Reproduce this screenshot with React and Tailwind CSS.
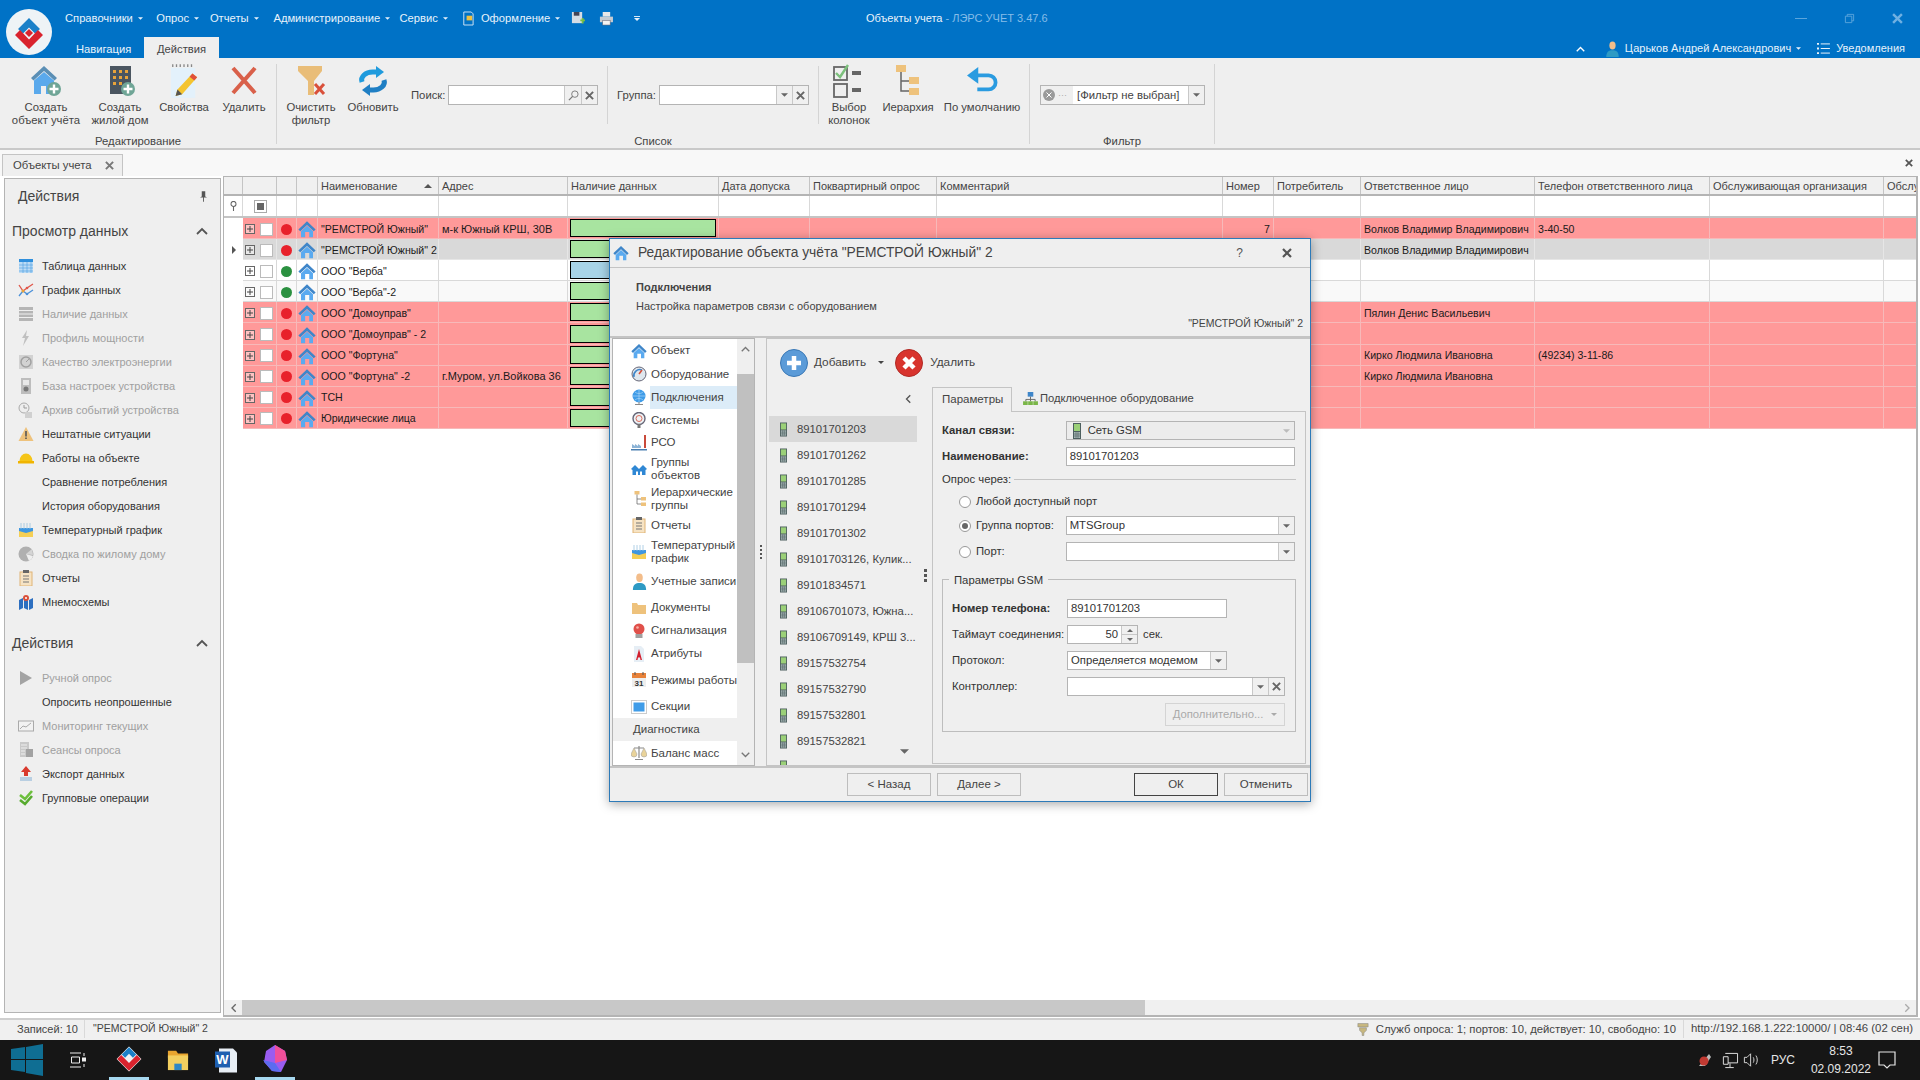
import React from "react";

const GRID_COLS =
  "grid grid-cols-[19px_34px_20px_21px_121px_129px_151px_91px_127px_286px_51px_87px_174px_175px_174px_35px]";

const Tri = ({ className = "w-[7px] h-[4px]" }) => (
  <svg viewBox="0 0 8 4" className={className}>
    <path d="M0 0h8L4 4z" fill="currentColor" />
  </svg>
);

const Cross = ({ className = "w-[9px] h-[9px] text-[#666]" }) => (
  <svg viewBox="0 0 10 10" className={className}>
    <path d="M1 1l8 8M9 1l-8 8" stroke="currentColor" strokeWidth="2.2" />
  </svg>
);

const Chevron = ({ className = "w-[12px] h-[8px] text-[#555]" }) => (
  <svg viewBox="0 0 12 8" className={className} fill="none">
    <path d="M1 7l5-5 5 5" stroke="currentColor" strokeWidth="1.8" />
  </svg>
);

const Logo = ({ className }) => (
  <svg viewBox="0 0 46 46" className={className}>
    <path d="M23 9l11 11-5 4.500-6-6-6 6-5-4.500z" fill="#1b80c8" />
    <path d="M9 26l5-5 9 9.500 9-9.500 5 5-14 14z" fill="#d9232e" />
    <path d="M23 20l4 4-4 4-4-4z" fill="#d9232e" />
  </svg>
);

const Home = ({ className = "w-[16px] h-[16px]" }) => (
  <svg viewBox="0 0 24 24" className={className}>
    <path d="M12 1.500L0.500 12.500 3 15l9-8.500 9 8.500 2.500-2.500z" fill="#3f86c9" />
    <path d="M4 15l8-7.500 8 7.500v8h-5v-7H9.500v7H4z" fill="#5aaaf0" />
  </svg>
);

const PlusBadge = () => (
  <>
    <circle cx="24" cy="24" r="7" fill="#6fa596" />
    <path d="M24 19.500v9M19.500 24h9" stroke="#fff" strokeWidth="2.400" />
  </>
);

const HouseAdd = () => (
  <svg viewBox="0 0 32 32" className="w-[32px] h-[32px]">
    <path d="M14 1L1 13l2.500 2.500L14 6l10.500 9.500L27 13z" fill="#5b8fb5" />
    <path d="M4 15.500L14 7l10 8.500V29h-8v-8h-5v8H4z" fill="#5aa9ec" />
    <PlusBadge />
  </svg>
);

const BuildingAdd = () => (
  <svg viewBox="0 0 32 32" className="w-[32px] h-[32px]">
    <rect x="6" y="1" width="21" height="28" fill="#4a5560" />
    <path d="M9 5h3v3H9zM15 5h3v3h-3zM21 5h3v3h-3zM9 11h3v3H9zM15 11h3v3h-3zM21 11h3v3h-3zM9 17h3v3H9zM15 17h3v3h-3z" fill="#e8a33a" />
    <PlusBadge />
  </svg>
);

const Notepad = () => (
  <svg viewBox="0 0 32 40" className="w-[30px] h-[38px]">
    <rect x="2" y="6" width="26" height="32" fill="#e3f1fb" />
    <path d="M4 2v3M8 2v3M12 2v3M16 2v3M20 2v3M24 2v3" stroke="#888" strokeWidth="1.400" />
    <path d="M25 12l5 4-16 18-7 2 2-7z" fill="#f4c430" />
    <path d="M25 12l5 4-3 3.500-5-4z" fill="#e0503c" />
    <path d="M9 29l5 5-7 2z" fill="#555" />
  </svg>
);

const BigX = () => (
  <svg viewBox="0 0 32 32" className="w-[32px] h-[32px]">
    <path d="M5 3l22 25M27 3L5 28" stroke="#d9604a" strokeWidth="4" />
  </svg>
);

const FunnelX = () => (
  <svg viewBox="0 0 32 32" className="w-[32px] h-[32px]">
    <path d="M3 1h24v5l-8 10v14l-6 0V16L3 6z" fill="#e9bd78" />
    <path d="M20 19l9 10M29 19l-9 10" stroke="#d9503a" strokeWidth="3" />
  </svg>
);

const Refresh = () => (
  <svg viewBox="0 0 32 32" className="w-[32px] h-[32px]" fill="none">
    <path d="M5 17a11 8 0 0 1 11-10h6" stroke="#1f9bdd" strokeWidth="5" />
    <path d="M27 15a11 8 0 0 1-11 10h-6" stroke="#1f7fc4" strokeWidth="5" />
    <path d="M19 1l8 6-8 6z" fill="#1f9bdd" />
    <path d="M13 19l-8 6 8 6z" fill="#1f7fc4" />
  </svg>
);

const ColumnsIcon = () => (
  <svg viewBox="0 0 32 34" className="w-[32px] h-[34px]" fill="none">
    <rect x="1" y="3" width="13" height="13" stroke="#666" strokeWidth="1.800" />
    <rect x="1" y="20" width="13" height="13" stroke="#666" strokeWidth="1.800" />
    <path d="M3 9l4 4 8-12" stroke="#7cc07c" strokeWidth="2.400" />
    <path d="M19 9h9M19 26h9" stroke="#666" strokeWidth="4" />
  </svg>
);

const Hierarchy = ({ className = "w-[24px] h-[32px]" }) => (
  <svg viewBox="0 0 24 32" className={className}>
    <rect x="0" y="0" width="10" height="7" fill="#eec27c" />
    <path d="M5 7v19h8M5 16h8" stroke="#666" strokeWidth="1.500" fill="none" />
    <rect x="13" y="12" width="10" height="7" fill="#eec27c" />
    <rect x="13" y="23" width="10" height="7" fill="#eec27c" />
  </svg>
);

const Undo = () => (
  <svg viewBox="0 0 34 32" className="w-[34px] h-[30px]" fill="none">
    <path d="M10 10h14a7 7 0 0 1 0 15H12" stroke="#2a9be0" strokeWidth="4" />
    <path d="M13 1v18L1 10z" fill="#2a9be0" />
  </svg>
);

const Person = ({ className = "w-[14px] h-[18px]" }) => (
  <svg viewBox="0 0 14 18" className={className}>
    <ellipse cx="7" cy="5" rx="3.500" ry="4.500" fill="#f3bd8a" />
    <path d="M0 18c0-6 3-7.500 7-7.500s7 1.500 7 7.500z" fill="#2e9ac4" />
  </svg>
);

// little sidebar and nav pictures, all 16 by 16
const Pic = ({ children, className = "w-[16px] h-[16px]" }) => (
  <svg viewBox="0 0 16 16" className={className}>
    {children}
  </svg>
);

const icons = {
  table: (
    <Pic>
      <rect x="1" y="1" width="14" height="14" fill="#bcdcf5" />
      <rect x="1" y="1" width="14" height="3" fill="#2f8fdc" />
      <path d="M1 7h14M1 10h14M1 13h14M5 4v11M9 4v11M13 4v11" stroke="#4aa0e0" strokeWidth=".6" />
    </Pic>
  ),
  chart: (
    <Pic>
      <path d="M1 3l4 6 4-3 6-4" stroke="#e0574a" fill="none" strokeWidth="1.300" />
      <path d="M1 14l4-5 4 3 6-4" stroke="#4a90d9" fill="none" strokeWidth="1.300" />
      <circle cx="5" cy="9" r="1.500" fill="#e8a33a" />
      <circle cx="9" cy="6" r="1.300" fill="#e0574a" />
      <circle cx="9" cy="12" r="1.300" fill="#4a90d9" />
    </Pic>
  ),
  bars: (
    <Pic>
      <path d="M1 1h14v3H1zM1 5h14v2.500H1zM1 8.500h14V11H1zM1 12h14v3H1z" fill="#b5b5b5" />
    </Pic>
  ),
  bolt: (
    <Pic>
      <path d="M9 0L4 8h3l-2 8 6-10H8z" fill="#c0c0c0" />
    </Pic>
  ),
  quality: (
    <Pic>
      <rect x="1" y="1" width="14" height="14" fill="#d2d2d2" />
      <circle cx="8" cy="8" r="5" fill="none" stroke="#a0a0a0" strokeWidth="1.500" />
      <path d="M8 8l3-3" stroke="#a0a0a0" />
    </Pic>
  ),
  base: (
    <Pic>
      <rect x="3" y="0" width="10" height="16" fill="#bdbdbd" />
      <rect x="5" y="2" width="6" height="5" fill="#e8e8e8" />
      <circle cx="8" cy="11" r="2.500" fill="#777" />
    </Pic>
  ),
  archive: (
    <Pic>
      <circle cx="6" cy="6" r="5" fill="#eee" stroke="#aaa" />
      <path d="M6 3v3h3" stroke="#999" fill="none" />
      <rect x="7" y="10" width="7" height="6" fill="#d0d0d0" />
    </Pic>
  ),
  warning: (
    <Pic>
      <path d="M8 1l7.500 14H.5z" fill="#eec27c" />
      <path d="M7.200 5h1.600v5.500H7.200zM7.200 11.500h1.600V13H7.200z" fill="#555" />
    </Pic>
  ),
  helmet: (
    <Pic>
      <path d="M1.500 11a6.500 7.500 0 0 1 13 0z" fill="#f5c518" />
      <path d="M0 11h16v2.500H0z" fill="#f0b400" />
    </Pic>
  ),
  temp: (
    <Pic>
      <rect x="1" y="6" width="14" height="9" fill="#f5cf55" />
      <path d="M1 6h14v3L8 11 1 9z" fill="#3f97e0" />
      <path d="M3 1v6M6 1v6M9 1v6M12 1v6" stroke="#9cc4e0" strokeWidth=".8" />
    </Pic>
  ),
  pie: (
    <Pic>
      <circle cx="8" cy="8" r="7.500" fill="#b0b0b0" />
      <path d="M8 8l7 2a7.500 7.500 0 0 1-4 5z" fill="#efefef" />
      <path d="M8 8l6-5 1 6z" fill="#d5d5d5" />
    </Pic>
  ),
  report: (
    <Pic>
      <rect x="2" y="2" width="12" height="14" fill="#f6e3c4" stroke="#e0b476" />
      <rect x="5" y="0" width="6" height="3" fill="#666" />
      <path d="M5 6h6M5 9h6M5 12h6" stroke="#777" />
    </Pic>
  ),
  map: (
    <Pic>
      <path d="M1 6l4-2v10l-4 2zM6 4l4 2v10l-4-2zM11 6l4-2v10l-4 2z" fill="#2d6fc0" />
      <circle cx="8" cy="4" r="3" fill="#d9503a" />
      <circle cx="8" cy="4" r="1" fill="#fff" />
    </Pic>
  ),
  play: (
    <Pic>
      <path d="M2 1l12 7-12 7z" fill="#a3a3a3" />
    </Pic>
  ),
  monitor: (
    <Pic>
      <rect x="0.500" y="3" width="15" height="10" fill="#f2f2f2" stroke="#aaa" />
      <path d="M2 11l3-3 3 1 5-4" stroke="#aaa" fill="none" />
    </Pic>
  ),
  sessions: (
    <Pic>
      <rect x="2" y="0" width="9" height="15" fill="#c9c9c9" />
      <rect x="8" y="7" width="7" height="8" fill="#a2a2a2" />
      <path d="M3 3h6M3 6h6M3 9h4M3 12h4" stroke="#eee" />
    </Pic>
  ),
  exportUp: (
    <Pic>
      <path d="M8 0l5 6h-3v4H6V6H3z" fill="#d93a2e" />
      <rect x="2" y="11" width="12" height="4" fill="#b9cfe2" />
    </Pic>
  ),
  checks: (
    <Pic>
      <path d="M2 5l5 4 7-8" stroke="#6cbf3c" strokeWidth="2.600" fill="none" />
      <path d="M2 10l5 4 7-8" stroke="#57ab2e" strokeWidth="2.600" fill="none" />
    </Pic>
  ),
  gauge: (
    <Pic>
      <circle cx="8" cy="8" r="7" fill="#dfe7ee" stroke="#667" />
      <path d="M3 11a6 6 0 0 1 8-7" stroke="#3f86c9" strokeWidth="1.600" fill="none" />
      <path d="M8 8l3-4" stroke="#d9503a" strokeWidth="1.500" />
    </Pic>
  ),
  globe: (
    <Pic>
      <circle cx="8" cy="7" r="6.500" fill="#3f9ce8" />
      <path d="M2 7h12M8 1v12M4 3c2 2 6 2 8 0M4 11c2-2 6-2 8 0" stroke="#a9d6f6" strokeWidth=".7" fill="none" />
      <path d="M8 13v2M4 15.500h8" stroke="#8a8a8a" />
    </Pic>
  ),
  gaugeStem: (
    <Pic>
      <circle cx="8" cy="6.500" r="6" fill="#eef2f5" stroke="#667" strokeWidth="1.400" />
      <circle cx="8" cy="6.500" r="3" fill="none" stroke="#d96a5a" />
      <rect x="6.500" y="12" width="3" height="4" fill="#777" />
    </Pic>
  ),
  factory: (
    <Pic>
      <rect x="13" y="0" width="2" height="13" fill="#c94a3a" />
      <path d="M1 13V9l3 2V9l3 2V9l3 2v2z" fill="#8db4d6" />
      <path d="M0 14h16v1.500H0z" fill="#4a7fb0" />
    </Pic>
  ),
  people: (
    <Pic>
      <path d="M0 8l4-4 4 4 4-4 4 4-1.500 1V14H11v-3.500H9V14H7v-3.500H5V14H1.500V9z" fill="#2f87d4" />
    </Pic>
  ),
  user: <Person className="w-[15px] h-[17px]" />,
  folder: (
    <Pic>
      <path d="M1 3h5l1 2h8v9H1z" fill="#eec27c" />
    </Pic>
  ),
  alarm: (
    <Pic>
      <circle cx="8" cy="6" r="5.500" fill="#e0504a" />
      <circle cx="6.500" cy="4.500" r="1.300" fill="#f7b0a8" />
      <rect x="4.500" y="11" width="7" height="4" fill="#a0a0a0" />
    </Pic>
  ),
  attr: (
    <Pic>
      <path d="M3 0h7l3 3v13H3z" fill="#e6eef5" />
      <path d="M5 14L8 3l3 11H9.500L9 11.500H7L6.500 14z" fill="#d3202e" />
    </Pic>
  ),
  calendar: (
    <Pic>
      <rect x="1" y="1" width="14" height="14" fill="#eee" />
      <rect x="1" y="1" width="14" height="5" fill="#e8823a" />
      <path d="M4 0v3M12 0v3" stroke="#555" />
      <text x="8" y="14" fontSize="8" fontWeight="700" textAnchor="middle" fill="#333" fontFamily="Liberation Sans">31</text>
    </Pic>
  ),
  section: (
    <Pic>
      <rect x="0.500" y="1.500" width="15" height="13" fill="#fff" stroke="#ccc" />
      <rect x="2.500" y="3.500" width="11" height="9" fill="#3f9ce8" />
    </Pic>
  ),
  scale: (
    <Pic>
      <path d="M8 1v12M3 3h10M4 14.500h8" stroke="#8a8a8a" strokeWidth="1.200" />
      <path d="M0 9l3-6 3 6a3 3 0 0 1-6 0zM10 9l3-6 3 6a3 3 0 0 1-6 0z" fill="#e9d39a" stroke="#999" strokeWidth=".5" />
    </Pic>
  ),
  hier: <Hierarchy className="w-[13px] h-[16px]" />,
};

const GsmIcon = ({ className = "w-[8px] h-[16px]" }) => (
  <svg viewBox="0 0 8 16" className={className}>
    <rect x="0" y="0" width="8" height="16" fill="#4d5f5f" />
    <rect x="1" y="1" width="6" height="7" fill="#9bd078" />
    <path d="M1 9h6v6H1z" fill="#a8b8b8" />
    <path d="M3 9v6M5 9v6M1 11h6M1 13h6" stroke="#4d5f5f" strokeWidth=".6" />
  </svg>
);

const menu = [
  { label: "Справочники", cls: "w-[92px]" },
  { label: "Опрос", cls: "w-[54px]" },
  { label: "Отчеты", cls: "w-[64px]" },
  { label: "Администрирование", cls: "w-[127px]" },
];

const sideTop = [
  ["table", "Таблица данных", 0],
  ["chart", "График данных", 0],
  ["bars", "Наличие данных", 1],
  ["bolt", "Профиль мощности", 1],
  ["quality", "Качество электроэнергии", 1],
  ["base", "База настроек устройства", 1],
  ["archive", "Архив событий устройства", 1],
  ["warning", "Нештатные ситуации", 0],
  ["helmet", "Работы на объекте", 0],
  [null, "Сравнение потребления", 0],
  [null, "История оборудования", 0],
  ["temp", "Температурный график", 0],
  ["pie", "Сводка по жилому дому", 1],
  ["report", "Отчеты", 0],
  ["map", "Мнемосхемы", 0],
];

const sideBottom = [
  ["play", "Ручной опрос", 1],
  [null, "Опросить неопрошенные", 0],
  ["monitor", "Мониторинг текущих", 1],
  ["sessions", "Сеансы опроса", 1],
  ["exportUp", "Экспорт данных", 0],
  ["checks", "Групповые операции", 0],
];

const headers = [
  "", "", "", "", "Наименование", "Адрес", "Наличие данных", "Дата допуска", "Поквартирный опрос",
  "Комментарий", "Номер", "Потребитель", "Ответственное лицо", "Телефон ответственного лица",
  "Обслуживающая организация", "Обслуживающая",
];

const PINK = "bg-[#ff9999] border-[#f7b9b9]";
const GREY = "bg-[#d9d9d9] border-[#e6e6e6]";
const WHITE = "bg-white border-[#d9d9d9]";
const OFFWHITE = "bg-[#f9f9f9] border-[#d9d9d9]";

const rows = [
  { name: "\"РЕМСТРОЙ Южный\"", addr: "м-к Южный КРШ, 30В", dot: "bg-[#e8212b]", tone: PINK, num: "7", person: "Волков Владимир Владимирович", phone: "3-40-50" },
  { name: "\"РЕМСТРОЙ Южный\" 2", dot: "bg-[#e8212b]", tone: GREY, selected: true, person: "Волков Владимир Владимирович" },
  { name: "ООО \"Верба\"", dot: "bg-[#2b9140]", tone: WHITE, bar: "bg-[#a8d4e8]" },
  { name: "ООО \"Верба\"-2", dot: "bg-[#2b9140]", tone: OFFWHITE },
  { name: "ООО \"Домоуправ\"", dot: "bg-[#e8212b]", tone: PINK, person: "Пялин Денис Васильевич" },
  { name: "ООО \"Домоуправ\" - 2", dot: "bg-[#e8212b]", tone: PINK },
  { name: "ООО \"Фортуна\"", dot: "bg-[#e8212b]", tone: PINK, person: "Кирко Людмила Ивановна", phone: "(49234) 3-11-86" },
  { name: "ООО \"Фортуна\" -2", addr: "г.Муром, ул.Войкова 36", dot: "bg-[#e8212b]", tone: PINK, person: "Кирко Людмила Ивановна" },
  { name: "ТСН", dot: "bg-[#e8212b]", tone: PINK },
  { name: "Юридические лица", dot: "bg-[#e8212b]", tone: PINK },
];

const navItems = [
  ["hier0", "Объект", "h-[24px]"],
  ["gauge", "Оборудование", "h-[23px]"],
  ["globe", "Подключения", "h-[23px]", "active"],
  ["gaugeStem", "Системы", "h-[23px]"],
  ["factory", "РСО", "h-[22px]"],
  ["people", "Группы объектов", "h-[31px]"],
  ["hier", "Иерархические группы", "h-[30px]"],
  ["report", "Отчеты", "h-[22px]"],
  ["temp", "Температурный график", "h-[32px]"],
  ["user", "Учетные записи", "h-[28px]"],
  ["folder", "Документы", "h-[24px]"],
  ["alarm", "Сигнализация", "h-[22px]"],
  ["attr", "Атрибуты", "h-[24px]"],
  ["calendar", "Режимы работы", "h-[30px]"],
  ["section", "Секции", "h-[23px]"],
  [null, "Диагностика", "h-[23px]", "group"],
  ["scale", "Баланс масс", "h-[24px]"],
];

const ports = [
  "89101701203", "89101701262", "89101701285", "89101701294", "89101701302",
  "89101703126, Кулик...", "89101834571", "89106701073, Южна...", "89106709149, КРШ 3...",
  "89157532754", "89157532790", "89157532801", "89157532821",
];

function RibbonBtn({ width, icon, lines }) {
  return (
    <div className={`flex flex-col items-center text-[#444] ${width}`}>
      <div className="mb-[4px] flex h-[33px] w-full items-center justify-center">{icon}</div>
      {lines.map((l) => (
        <span key={l} className="leading-[13px] whitespace-nowrap">
          {l}
        </span>
      ))}
    </div>
  );
}

function Ribbon() {
  return (
    <div className="flex h-[92px] bg-[#efefef] border-b-2 border-[#c9c9c9] text-[11.3px]">
      <div className="mt-[6px] flex h-[80px] w-[277px] flex-col border-r border-[#d4d4d4]">
        <div className="flex h-[70px] shrink-0 pl-[8px]">
          <RibbonBtn width="w-[76px]" icon={<HouseAdd />} lines={["Создать", "объект учёта"]} />
          <RibbonBtn width="w-[72px]" icon={<BuildingAdd />} lines={["Создать", "жилой дом"]} />
          <RibbonBtn width="w-[56px]" icon={<Notepad />} lines={["Свойства"]} />
          <RibbonBtn width="w-[64px]" icon={<BigX />} lines={["Удалить"]} />
        </div>
        <div className="text-center leading-[14px] text-[#444]">Редактирование</div>
      </div>

      <div className="mt-[6px] flex h-[80px] w-[753px] flex-col border-r border-[#d4d4d4]">
        <div className="flex h-[70px] shrink-0">
          <RibbonBtn width="w-[68px]" icon={<FunnelX />} lines={["Очистить", "фильтр"]} />
          <RibbonBtn width="w-[56px]" icon={<Refresh />} lines={["Обновить"]} />
          <div className="ml-[10px] pt-[21px] text-[#444]">
            <div className="flex items-center h-[20px]">
              <span className="w-[37px]">Поиск:</span>
              <div className="flex h-[20px] w-[150px] border border-[#b4b4b4] bg-white">
                <div className="flex-1" />
                <div className="flex w-[17px] items-center justify-center border-l border-[#c8c8c8] bg-[#f0f0f0]">
                  <svg viewBox="0 0 12 12" className="w-[11px] h-[11px]" fill="none">
                    <circle cx="7.500" cy="4.500" r="3.500" stroke="#777" />
                    <path d="M5 7l-4 4" stroke="#777" strokeWidth="1.400" />
                  </svg>
                </div>
                <div className="flex w-[16px] items-center justify-center border-l border-[#c8c8c8] bg-[#f0f0f0]">
                  <Cross />
                </div>
              </div>
            </div>
          </div>
          <div className="ml-[9px] h-[58px] w-px mt-[2px] bg-[#d4d4d4]" />
          <div className="ml-[9px] pt-[21px] text-[#444]">
            <div className="flex items-center h-[20px]">
              <span className="w-[42px]">Группа:</span>
              <div className="flex h-[20px] w-[150px] border border-[#b4b4b4] bg-white">
                <div className="flex-1" />
                <div className="flex w-[16px] items-center justify-center border-l border-[#c8c8c8] bg-[#f0f0f0] text-[#666]">
                  <Tri />
                </div>
                <div className="flex w-[16px] items-center justify-center border-l border-[#c8c8c8] bg-[#f0f0f0]">
                  <Cross />
                </div>
              </div>
            </div>
          </div>
          <div className="ml-[9px] h-[58px] w-px mt-[2px] bg-[#d4d4d4]" />
          <RibbonBtn width="w-[60px]" icon={<ColumnsIcon />} lines={["Выбор", "колонок"]} />
          <RibbonBtn width="w-[58px]" icon={<Hierarchy />} lines={["Иерархия"]} />
          <RibbonBtn width="w-[90px]" icon={<Undo />} lines={["По умолчанию"]} />
        </div>
        <div className="text-center leading-[14px] text-[#444]">Список</div>
      </div>

      <div className="mt-[6px] flex h-[80px] w-[185px] flex-col border-r border-[#d4d4d4]">
        <div className="flex h-[70px] shrink-0 pl-[10px] pt-[21px]">
          <div className="flex h-[20px] w-[165px] border border-[#b4b4b4] bg-white text-[#444]">
            <div className="flex w-[32px] items-center gap-[3px] bg-[#efefef] pl-[2px]">
              <svg viewBox="0 0 12 12" className="w-[12px] h-[12px]">
                <circle cx="6" cy="6" r="6" fill="#9a9a9a" />
                <path d="M3.500 3.500l5 5M8.500 3.500l-5 5" stroke="#fff" />
              </svg>
              <span className="text-[#aaa] text-[9px] leading-none">···</span>
            </div>
            <div className="flex flex-1 items-center pl-[4px]">[Фильтр не выбран]</div>
            <div className="flex w-[16px] items-center justify-center border-l border-[#c8c8c8] bg-[#f0f0f0] text-[#666]">
              <Tri />
            </div>
          </div>
        </div>
        <div className="text-center leading-[14px] text-[#444]">Фильтр</div>
      </div>
    </div>
  );
}

function TopBar() {
  return (
    <div className="relative flex h-[58px] flex-col bg-[#0072c6] text-[11.2px] text-[#e8f2fb]">
      <div className="absolute left-[6px] top-[9px] z-10 flex h-[46px] w-[46px] items-center justify-center rounded-full bg-[#eef3f6]">
        <Logo className="h-[46px] w-[46px]" />
      </div>
      <div className="flex h-[37px] items-center">
        <div className="flex items-center pl-[65px] w-[640px]">
          {menu.map((m) => (
            <div key={m.label} className={`flex items-center gap-[5px] ${m.cls}`}>
              <span>{m.label}</span>
              <Tri className="w-[5px] h-[3px]" />
            </div>
          ))}
          <div className="flex items-center gap-[5px] w-[62px]">
            <span>Сервис</span>
            <Tri className="w-[5px] h-[3px]" />
          </div>
          <svg viewBox="0 0 16 16" className="w-[15px] h-[15px] mr-[5px]" fill="none">
            <path d="M3 1h8l2 2v12H3z" stroke="#d5e6f5" />
            <rect x="6" y="5" width="6" height="5" fill="#f0c040" />
          </svg>
          <div className="flex items-center gap-[5px] w-[91px]">
            <span>Оформление</span>
            <Tri className="w-[5px] h-[3px]" />
          </div>
          <svg viewBox="0 0 16 16" className="w-[15px] h-[15px] mr-[13px]">
            <rect x="1" y="1" width="11" height="12" fill="#d5dde5" />
            <rect x="3" y="1" width="6" height="4" fill="#445" />
            <path d="M10 10h5M12.500 7.500v6" stroke="#7ac043" strokeWidth="2" />
          </svg>
          <svg viewBox="0 0 16 16" className="w-[15px] h-[15px] mr-[20px]">
            <rect x="4" y="1" width="8" height="5" fill="#e8e8e8" />
            <rect x="1" y="6" width="14" height="6" fill="#c5ccd3" />
            <rect x="4" y="10" width="8" height="5" fill="#f2f2f2" stroke="#667" strokeWidth=".6" />
          </svg>
          <div className="flex flex-col items-center gap-[1px]">
            <div className="w-[6px] h-px bg-[#d5e6f5]" />
            <Tri className="w-[6px] h-[3px]" />
          </div>
        </div>
        <div className="w-[226px]" />
        <div className="whitespace-nowrap text-[11px] text-[#eaf3fb]">
          Объекты учета <span className="text-[#86bde8]">- ЛЭРС УЧЕТ 3.47.6</span>
        </div>
        <div className="ml-auto flex items-center gap-[37px] pr-[17px] text-[#6fb0e2]">
          <div className="h-px w-[12px] bg-[#5ba5dc]" />
          <svg viewBox="0 0 12 12" className="w-[11px] h-[11px]" fill="none">
            <path d="M1.500 3.500h7v7h-7zM3.500 3.500v-2h7v7h-2" stroke="#5ba5dc" />
          </svg>
          <Cross className="w-[11px] h-[11px]" />
        </div>
      </div>
      <div className="flex h-[21px] items-stretch">
        <div className="ml-[76px] w-[68px] pt-[2px] leading-[20px]">Навигация</div>
        <div className="w-[75px] bg-[#efefef] pt-[2px] text-center leading-[20px] text-[#444]">Действия</div>
        <div className="ml-auto flex items-center pr-[15px] pt-[2px] text-[11px]">
          <Chevron className="h-[6px] w-[9px] text-white mr-[21px]" />
          <Person className="mr-[6px] h-[16px] w-[13px]" />
          <span className="mr-[5px]">Царьков Андрей Александрович</span>
          <Tri className="mr-[16px] h-[3px] w-[5px]" />
          <svg viewBox="0 0 14 12" className="mr-[6px] h-[11px] w-[13px]">
            <path d="M0 0h2v2H0zM0 5h2v2H0zM0 10h2v2H0z" fill="#fff" />
            <path d="M4 1h10M4 6h10M4 11h10" stroke="#fff" />
          </svg>
          <span>Уведомления</span>
        </div>
      </div>
    </div>
  );
}

function SideItem({ icon, label, off }) {
  return (
    <div className="flex h-[24px] items-center">
      <div className="flex w-[37px] shrink-0 items-center justify-center pl-[4px]">{icon ? icons[icon] : null}</div>
      <span className={off ? "text-[#a0a0a0]" : "text-[#333]"}>{label}</span>
    </div>
  );
}

function SidePanel() {
  return (
    <div className="flex w-[223px] shrink-0 flex-col pb-[5px] pl-[4px] pr-[2px] pt-[2px]">
      <div className="flex flex-1 flex-col border border-[#b4b4b4] bg-[#efefef] text-[11px]">
        <div className="flex h-[35px] items-center justify-between pl-[13px] pr-[13px] text-[14px] text-[#444]">
          <span>Действия</span>
          <svg viewBox="0 0 8 12" className="w-[7px] h-[11px]">
            <path d="M2 0h4v6l2 1H0l2-1zM3.500 7h1v5h-1z" fill="#555" />
          </svg>
        </div>
        <div className="flex h-[34px] items-center justify-between pl-[7px] pr-[12px] text-[14px] text-[#444]">
          <span>Просмотр данных</span>
          <Chevron />
        </div>
        <div className="mt-[6px] flex flex-col">
          {sideTop.map(([icon, label, off]) => (
            <SideItem key={label} icon={icon} label={label} off={off} />
          ))}
        </div>
        <div className="mt-[12px] flex h-[34px] items-center justify-between pl-[7px] pr-[12px] text-[14px] text-[#444]">
          <span>Действия</span>
          <Chevron />
        </div>
        <div className="mt-[6px] flex flex-col">
          {sideBottom.map(([icon, label, off]) => (
            <SideItem key={label} icon={icon} label={label} off={off} />
          ))}
        </div>
      </div>
    </div>
  );
}

function DataGrid() {
  return (
    <div className="flex min-w-0 flex-1 flex-col mb-[1px] mr-[2px] border-2 border-l border-t border-[#b4b4b4] bg-white overflow-hidden">
      <div className={`${GRID_COLS} h-[19px] shrink-0 border-b-2 border-[#b4b4b4] bg-[#f0f0f0] text-[11px] leading-[13px] text-[#444]`}>
        {headers.map((h, i) => (
          <div key={i} className="relative flex items-center overflow-hidden whitespace-nowrap border-r border-[#c4c4c4] pl-[3px] pt-[2px]">
            {h}
            {i === 4 ? (
              <Tri className="absolute right-[6px] top-[7px] h-[4px] w-[8px] rotate-180 text-[#555]" />
            ) : null}
          </div>
        ))}
      </div>
      <div className={`${GRID_COLS} h-[22px] shrink-0 border-b-2 border-[#c4c4c4]`}>
        {headers.map((_, i) => (
          <div key={i} className="flex items-center border-r border-[#d9d9d9]">
            {i === 0 ? (
              <svg viewBox="0 0 8 12" className="ml-[6px] h-[10px] w-[7px]">
                <circle cx="4" cy="3.500" r="3" fill="none" stroke="#666" strokeWidth="1.300" />
                <path d="M4 6v6" stroke="#666" strokeWidth="1.300" />
              </svg>
            ) : null}
            {i === 1 ? (
              <div className="ml-[11px] flex h-[13px] w-[13px] items-center justify-center border border-[#aaa]">
                <div className="h-[7px] w-[7px] bg-[#666]" />
              </div>
            ) : null}
          </div>
        ))}
      </div>
      {rows.map((r) => (
        <GridRow key={r.name} r={r} />
      ))}
      <div className="flex-1" />
      <div className="flex h-[15px] shrink-0 items-stretch bg-[#f0f0f0]">
        <div className="flex w-[18px] items-center justify-center">
          <Chevron className="h-[6px] w-[9px] -rotate-90 text-[#666]" />
        </div>
        <div className="w-[903px] bg-[#c8c8c8]" />
        <div className="flex-1" />
        <div className="flex w-[18px] items-center justify-center">
          <Chevron className="h-[6px] w-[9px] rotate-90 text-[#aaa]" />
        </div>
      </div>
    </div>
  );
}

function GridRow({ r }) {
  const cell = `flex items-center overflow-hidden whitespace-nowrap border-r border-b pl-[3px] pt-[2px] ${r.tone}`;
  return (
    <div className={`${GRID_COLS} h-[21.100px] shrink-0 text-[10.6px] leading-[13px] text-[#1a1a1a]`}>
      <div className="flex items-center justify-center bg-white">
        {r.selected ? <div className="h-0 w-0 border-y-[4px] border-l-[4px] border-y-transparent border-l-[#555]" /> : null}
      </div>
      <div className={`${cell} gap-[5px] !pl-[2px]`}>
        <div className="flex h-[10px] w-[10px] items-center justify-center border border-[#666] bg-white/40">
          <svg viewBox="0 0 8 8" className="h-[8px] w-[8px]">
            <path d="M1 4h6M4 1v6" stroke="#444" />
          </svg>
        </div>
        <div className="h-[13px] w-[13px] border border-[#bbb] bg-white" />
      </div>
      <div className={`${cell} justify-center !pl-0`}>
        <div className={`h-[11px] w-[11px] rounded-full ${r.dot}`} />
      </div>
      <div className={`${cell} justify-center !pl-0`}>
        <Home className="h-[18px] w-[18px]" />
      </div>
      <div className={cell}>{r.name}</div>
      <div className={`${cell} text-[11px]`}>{r.addr}</div>
      <div className={`${cell} !pl-0 !pt-0`}>
        <div className={`ml-[2px] h-[18px] w-[146px] border border-black ${r.bar || "bg-[#a8e4a0]"}`} />
      </div>
      <div className={cell} />
      <div className={cell} />
      <div className={cell} />
      <div className={`${cell} justify-end pr-[3px]`}>{r.num}</div>
      <div className={cell} />
      <div className={cell}>{r.person}</div>
      <div className={cell}>{r.phone}</div>
      <div className={cell} />
      <div className={cell} />
    </div>
  );
}

const inputCls = "flex items-center border border-[#b4b4b4] bg-white px-[3px] text-[#333]";

function Combo({ value, className, disabled, extra }) {
  return (
    <div className={`flex h-[19px] border border-[#b4b4b4] bg-white text-[#333] ${className}`}>
      <div className="flex flex-1 items-center pl-[3px]">{value}</div>
      <div className={`flex w-[16px] items-center justify-center ${disabled ? "text-[#bbb]" : "border-l border-[#c8c8c8] bg-[#f0f0f0] text-[#666]"}`}>
        <Tri />
      </div>
      {extra ? (
        <div className="flex w-[16px] items-center justify-center border-l border-[#c8c8c8] bg-[#f0f0f0]">
          <Cross />
        </div>
      ) : null}
    </div>
  );
}

function Radio({ checked, label, labelWidth }) {
  return (
    <div className={`flex items-center gap-[5px] pl-[17px] ${labelWidth}`}>
      <div className="flex h-[12px] w-[12px] items-center justify-center rounded-full border border-[#999] bg-white">
        {checked ? <div className="h-[6px] w-[6px] rounded-full bg-[#666]" /> : null}
      </div>
      <span>{label}</span>
    </div>
  );
}

function FormTab() {
  return (
    <div className="flex flex-1 flex-col border border-[#c4c4c4] pl-[9px] pr-[10px] pt-[9px] text-[11.3px] text-[#333]">
      <div className="flex h-[19px] items-center">
        <span className="w-[124px] font-bold">Канал связи:</span>
        <div className="flex h-[19px] w-[230px] items-center border border-[#b4b4b4] bg-[#ececec] pl-[6px]">
          <GsmIcon />
          <span className="ml-[7px] flex-1">Сеть GSM</span>
          <div className="flex w-[16px] justify-center text-[#bbb]">
            <Tri />
          </div>
        </div>
      </div>
      <div className="mt-[7px] flex h-[19px] items-center">
        <span className="w-[124px] font-bold">Наименование:</span>
        <div className={`${inputCls} h-[19px] w-[230px]`}>89101701203</div>
      </div>
      <div className="mt-[4px] flex h-[19px] w-[354px] items-center gap-[3px]">
        <span>Опрос через:</span>
        <div className="h-px flex-1 bg-[#c4c4c4]" />
      </div>
      <div className="mt-[3px] flex h-[19px] items-center">
        <Radio label="Любой доступный порт" labelWidth="w-[200px]" />
      </div>
      <div className="mt-[5px] flex h-[19px] items-center">
        <Radio checked label="Группа портов:" labelWidth="w-[124px]" />
        <Combo value="MTSGroup" className="w-[230px]" />
      </div>
      <div className="mt-[7px] flex h-[19px] items-center">
        <Radio label="Порт:" labelWidth="w-[124px]" />
        <Combo value="" className="w-[230px]" />
      </div>
      <div className="relative mt-[18px] flex h-[153px] w-[354px] flex-col border border-[#bdbdbd] pl-[9px] pt-[19px]">
        <span className="absolute left-[6px] top-[-8px] bg-[#efefef] px-[5px]">Параметры GSM</span>
        <div className="flex h-[19px] items-center">
          <span className="w-[115px] font-bold">Номер телефона:</span>
          <div className={`${inputCls} h-[19px] w-[160px]`}>89101701203</div>
        </div>
        <div className="mt-[7px] flex h-[19px] items-center">
          <span className="w-[115px]">Таймаут соединения:</span>
          <div className="flex h-[19px] w-[71px] border border-[#b4b4b4] bg-white">
            <div className="flex flex-1 items-center justify-end pr-[3px]">50</div>
            <div className="flex w-[16px] flex-col border-l border-[#c8c8c8] bg-[#f0f0f0] text-[#666]">
              <div className="flex flex-1 items-center justify-center border-b border-[#c8c8c8]">
                <Tri className="h-[3px] w-[6px] rotate-180" />
              </div>
              <div className="flex flex-1 items-center justify-center">
                <Tri className="h-[3px] w-[6px]" />
              </div>
            </div>
          </div>
          <span className="ml-[5px]">сек.</span>
        </div>
        <div className="mt-[7px] flex h-[19px] items-center">
          <span className="w-[115px]">Протокол:</span>
          <Combo value="Определяется модемом" className="w-[160px]" />
        </div>
        <div className="mt-[7px] flex h-[19px] items-center">
          <span className="w-[115px]">Контроллер:</span>
          <Combo value="" extra className="w-[218px]" />
        </div>
        <div className="mt-[7px] flex h-[23px] w-[333px] justify-end">
          <div className="flex w-[120px] items-center justify-center gap-[8px] border border-[#d4d4d4] text-[#aaa]">
            <span>Дополнительно...</span>
            <Tri className="h-[3px] w-[6px]" />
          </div>
        </div>
      </div>
    </div>
  );
}

function Dialog() {
  return (
    <div className="absolute left-[609px] top-[238px] flex h-[564px] w-[702px] flex-col border border-[#2d7ab8] bg-[#efefef] text-[11.5px] text-[#444] shadow-[0_2px_10px_rgba(0,0,0,0.35)]">
      <div className="flex h-[29px] items-center border-b border-[#c4c4c4] pl-[3px]">
        <Home className="h-[16px] w-[16px]" />
        <span className="ml-[9px] flex-1 text-[13.800px] text-[#444]">
          Редактирование объекта учёта "РЕМСТРОЙ Южный" 2
        </span>
        <span className="mr-[39px] text-[12px] text-[#555]">?</span>
        <Cross className="mr-[18px] h-[10px] w-[10px] text-[#555]" />
      </div>
      <div className="flex h-[70px] flex-col border-b-2 border-[#c4c4c4] pl-[26px] pr-[7px] text-[11px]">
        <b className="mt-[12px] leading-[14px]">Подключения</b>
        <span className="mt-[5px] leading-[14px]">Настройка параметров связи с оборудованием</span>
        <span className="mt-[3px] text-right text-[10.500px] leading-[14px]">"РЕМСТРОЙ Южный" 2</span>
      </div>
      <div className="flex h-[428px]">
        <div className="ml-[2px] flex w-[143px] border border-[#b4b4b4] bg-white">
          <div className="flex min-w-0 flex-1 flex-col">
            {navItems.map(([icon, label, h, kind]) => (
              <div key={label} className={`flex items-center ${h} ${kind === "group" ? "bg-[#efefef]" : ""}`}>
                {kind === "group" ? (
                  <span className="pl-[20px]">{label}</span>
                ) : (
                  <>
                    <div className="flex w-[37px] shrink-0 justify-end pr-[3px] pl-[16px]">
                      {icon === "hier0" ? <Home /> : icons[icon]}
                    </div>
                    <span className={`flex h-full flex-1 items-center pl-[1px] leading-[13px] ${kind === "active" ? "bg-[#dcecf8]" : ""}`}>
                      {label}
                    </span>
                  </>
                )}
              </div>
            ))}
          </div>
          <div className="flex w-[17px] flex-col bg-[#efefef]">
            <div className="flex h-[35px] items-start justify-center pt-[7px]">
              <Chevron className="h-[6px] w-[9px] text-[#777]" />
            </div>
            <div className="h-[289px] bg-[#c0c0c0]" />
            <div className="mt-auto flex h-[20px] items-center justify-center">
              <Chevron className="h-[6px] w-[9px] rotate-180 text-[#777]" />
            </div>
          </div>
        </div>
        <div className="flex w-[11px] flex-col items-center gap-[2px] pt-[207px] pl-[1px]">
          <div className="h-[2px] w-[2px] bg-[#555]" />
          <div className="h-[2px] w-[2px] bg-[#555]" />
          <div className="h-[2px] w-[2px] bg-[#555]" />
          <div className="h-[2px] w-[2px] bg-[#555]" />
        </div>
        <div className="flex flex-1 flex-col border border-[#c4c4c4] border-r-0">
          <div className="flex h-[47px] items-center pl-[13px]">
            <svg viewBox="0 0 28 28" className="h-[28px] w-[28px]">
              <circle cx="14" cy="14" r="13.500" fill="#5b9bd8" stroke="#3a78b5" />
              <path d="M14 7v14M7 14h14" stroke="#fff" strokeWidth="4.500" />
            </svg>
            <span className="ml-[6px] text-[11.800px]">Добавить</span>
            <Tri className="ml-[12px] h-[3px] w-[6px] text-[#444]" />
            <svg viewBox="0 0 28 28" className="ml-[11px] h-[28px] w-[28px]">
              <circle cx="14" cy="14" r="13.500" fill="#d8342e" stroke="#b02a25" />
              <path d="M9 9l10 10M19 9L9 19" stroke="#fff" strokeWidth="4.500" />
            </svg>
            <span className="ml-[7px] text-[11.800px]">Удалить</span>
          </div>
          <div className="flex flex-1 min-h-0">
            <div className="relative flex w-[165px] shrink-0 flex-col pl-[2px] overflow-hidden">
              <div className="flex h-[30px] shrink-0 items-center justify-end pr-[19px] pb-[5px]">
                <Chevron className="h-[6px] w-[10px] -rotate-90 text-[#555]" />
              </div>
              {ports.map((p, i) => (
                <div key={p} className={`flex h-[26px] w-[148px] shrink-0 items-center whitespace-nowrap text-[11.300px] ${i === 0 ? "bg-[#d9d9d9]" : ""}`}>
                  <div className="flex w-[28px] justify-center">
                    <GsmIcon className="h-[15px] w-[7px]" />
                  </div>
                  <span>{p}</span>
                </div>
              ))}
              <div className="flex h-[26px] w-[148px] shrink-0">
                <div className="flex w-[28px] justify-center pt-[6px]">
                  <GsmIcon className="h-[15px] w-[7px]" />
                </div>
              </div>
              <Tri className="absolute left-[133px] top-[363px] h-[5px] w-[9px] text-[#666]" />
              <div className="absolute right-[5px] top-[183px] flex flex-col gap-[2px]">
                <div className="h-[3px] w-[3px] bg-[#555]" />
                <div className="h-[3px] w-[3px] bg-[#555]" />
                <div className="h-[3px] w-[3px] bg-[#555]" />
              </div>
            </div>
            <div className="flex w-[374px] flex-col pb-[1px]">
              <div className="flex h-[25px] items-end">
                <div className="flex h-[25px] w-[80px] items-center border border-b-0 border-[#c4c4c4] bg-[#efefef] pl-[9px] -mb-px relative z-10">
                  Параметры
                </div>
                <div className="flex h-[25px] items-center pl-[11px] gap-[2px] text-[11.200px]">
                  <svg viewBox="0 0 16 14" className="h-[13px] w-[15px]">
                    <rect x="5" y="0" width="6" height="5" fill="#3f86c9" />
                    <path d="M8 5v3M3 8h10v2M3 8v2M8 8v2" stroke="#666" fill="none" />
                    <rect x="0" y="10" width="5" height="4" fill="#7ab648" />
                    <rect x="5.500" y="10" width="5" height="4" fill="#7ab648" />
                    <rect x="11" y="10" width="5" height="4" fill="#7ab648" />
                  </svg>
                  <span>Подключенное оборудование</span>
                </div>
              </div>
              <FormTab />
            </div>
          </div>
        </div>
      </div>
      <div className="flex flex-1 items-center border-t-2 border-[#c4c4c4] text-[11.5px] text-[#444]">
        <div className="ml-[237px] flex h-[23px] w-[84px] items-center justify-center border border-[#bdbdbd]">&lt; Назад</div>
        <div className="ml-[6px] flex h-[23px] w-[84px] items-center justify-center border border-[#bdbdbd]">Далее &gt;</div>
        <div className="ml-[113px] flex h-[23px] w-[84px] items-center justify-center border border-[#444]">ОК</div>
        <div className="ml-[6px] flex h-[23px] w-[84px] items-center justify-center border border-[#bdbdbd]">Отменить</div>
      </div>
    </div>
  );
}

function StatusBar() {
  return (
    <div className="flex h-[22px] items-center border-t-2 border-[#cfcfcf] bg-[#f0f0f0] pb-[2px] text-[11px] text-[#444]">
      <span className="ml-[17px] w-[67px]">Записей: 10</span>
      <div className="h-full w-px bg-[#d9d9d9]" />
      <span className="ml-[8px] text-[10.500px]">"РЕМСТРОЙ Южный" 2</span>
      <div className="ml-auto flex items-center h-full text-[11.300px]">
        <svg viewBox="0 0 14 16" className="mr-[7px] h-[15px] w-[12px]">
          <path d="M1 1h12v4H1zM3 6h8v3l-3 3v3H6v-3L3 9z" fill="#c7b77f" stroke="#888" strokeWidth=".6" />
        </svg>
        <span>Служб опроса: 1; портов: 10, действует: 10, свободно: 10</span>
        <div className="mx-[7px] h-full w-px bg-[#d9d9d9]" />
        <span className="mr-[7px] text-[11.400px]">http://192.168.1.222:10000/ | 08:46 (02 сен)</span>
      </div>
    </div>
  );
}

function Taskbar() {
  return (
    <div className="flex h-[40px] items-stretch bg-[#161616] text-[12px] text-[#e6e6e6]">
      <div className="flex w-[56px] items-center justify-center pr-[2px]">
        <svg viewBox="0 0 32 32" className="h-[32px] w-[32px]">
          <path d="M0 5l14-2v12H0zM15 3l17-3v15H15zM0 16h14v12L0 26zM15 16h17v16l-17-3z" fill="#0f6e93" />
        </svg>
      </div>
      <div className="flex w-[44px] items-center justify-center">
        <svg viewBox="0 0 16 16" className="h-[16px] w-[16px]" fill="none" stroke="#eee">
          <path d="M0 1h11M0 15h11M1.500 5h8v6h-8zM14 1v3M14 12v3" />
          <rect x="12.500" y="6" width="3" height="3" fill="#eee" />
        </svg>
      </div>
      <div className="flex w-[40px] items-center justify-center border-b-[3px] border-[#a6d8ef] ml-[9px]">
        <svg viewBox="0 0 46 46" className="h-[30px] w-[30px]">
          <path d="M23 4l19 19-19 19L4 23z" fill="#eef3f6" />
          <path d="M23 5l11 11-5 5-6-6-6 6-5-5z" fill="#1b80c8" />
          <path d="M5 23l6-6 12 12 12-12 6 6-18 18z" fill="#d9232e" />
        </svg>
      </div>
      <div className="flex w-[58px] items-center justify-center">
        <svg viewBox="0 0 24 24" className="h-[22px] w-[24px]">
          <path d="M1 2h9l2 3h11v5H1z" fill="#e9a52f" />
          <rect x="1" y="7" width="22" height="16" fill="#f3cf5f" />
          <rect x="8" y="16" width="8" height="7" fill="#2f87c4" />
        </svg>
      </div>
      <div className="flex w-[38px] items-center justify-center">
        <svg viewBox="0 0 22 24" className="h-[25px] w-[22px]">
          <path d="M4 0h14l4 4v20H4z" fill="#e8eef5" />
          <path d="M0 3h15v16H0z" fill="#1f5fb0" />
          <text x="7.500" y="15" fontSize="13" fontWeight="700" textAnchor="middle" fill="#fff" fontFamily="Liberation Sans">W</text>
        </svg>
      </div>
      <div className="ml-[10px] flex w-[40px] items-center justify-center border-b-[3px] border-[#a6d8ef]">
        <svg viewBox="0 0 24 28" className="h-[28px] w-[24px]">
          <path d="M12 0l10 6 2 9-6 12-9-1-8-9 2-11z" fill="#9a5cf0" />
          <path d="M12 0l10 6 2 9-12 3z" fill="#f04f9a" />
          <path d="M0 15l12 3 6 9-9-1z" fill="#5b6cf0" />
        </svg>
      </div>
      <div className="ml-auto flex items-center">
        <svg viewBox="0 0 16 16" className="mr-[8px] h-[16px] w-[16px]">
          <path d="M2 14L12 2l2 3-6 9z" fill="#bbb" />
          <circle cx="7" cy="9" r="4.500" fill="#c23a32" />
        </svg>
        <svg viewBox="0 0 18 18" className="mr-[4px] h-[17px] w-[18px]" fill="none" stroke="#e6e6e6">
          <path d="M4 1.500h13v10H7M2 5h5v8H2zM4 16.500h9M9 12v4" />
        </svg>
        <svg viewBox="0 0 18 18" className="mr-[11px] h-[16px] w-[17px]" fill="none" stroke="#e6e6e6">
          <path d="M1 6h3l4-4v14l-4-4H1zM11 6c1 2 1 4 0 6M14 4c2 3 2 7 0 10" />
        </svg>
        <span className="mr-[16px]">РУС</span>
        <div className="mr-[7px] flex flex-col items-center leading-[18px]">
          <span>8:53</span>
          <span>02.09.2022</span>
        </div>
        <svg viewBox="0 0 18 18" className="mr-[24px] h-[18px] w-[18px]" fill="none" stroke="#e6e6e6" strokeWidth="1.200">
          <path d="M1 1h16v13h-5l-3 3-3-3H1z" />
        </svg>
      </div>
    </div>
  );
}

export default function App() {
  return (
    <div className="relative flex h-[1080px] w-[1920px] flex-col overflow-hidden bg-white font-['Liberation_Sans',sans-serif]">
      <TopBar />
      <Ribbon />
      <div className="flex h-[26px] items-end bg-[#f8f8f8] text-[11.3px] text-[#444]">
        <div className="ml-[2px] flex h-[22px] w-[121px] items-center justify-between border border-b-0 border-[#c4c4c4] bg-[#efefef] pl-[10px] pr-[8px]">
          <span>Объекты учета</span>
          <Cross className="h-[9px] w-[9px] text-[#777]" />
        </div>
        <div className="relative h-full flex-1">
          <Cross className="absolute right-[7px] top-[9px] h-[8px] w-[8px] text-[#555]" />
        </div>
      </div>
      <div className="flex h-[842px]">
        <SidePanel />
        <DataGrid />
      </div>
      <StatusBar />
      <Taskbar />
      <Dialog />
    </div>
  );
}
